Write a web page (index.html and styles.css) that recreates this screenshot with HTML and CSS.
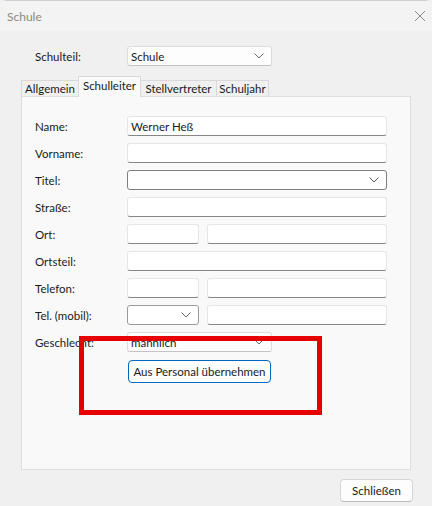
FILE: index.html
```html
<!DOCTYPE html>
<html lang="de">
<head>
<meta charset="utf-8">
<title>Schule</title>
<link rel="stylesheet" href="styles.css">
</head>
<body>
<div class="window">
  <div class="titlebar">
    <span class="title">Schule</span>
    <svg class="close" width="12" height="12" viewBox="0 0 12 12"><path d="M1 1 L11 11 M11 1 L1 11" stroke="#8a8a8a" stroke-width="1" fill="none"/></svg>
  </div>
  <div class="body">
    <div class="top-row">
      <span class="label">Schulteil:</span>
      <div class="select light w145"><span class="val">Schule</span><svg class="chev" width="10" height="6" viewBox="0 0 10 6"><path d="M0.5 0.5 L5 5 L9.5 0.5" stroke="#6a6a6a" fill="none"/></svg></div>
    </div>
    <div class="tabs">
      <div class="tab t-allg">Allgemein</div>
      <div class="tab active t-schul">Schulleiter</div>
      <div class="tab t-stell">Stellvertreter</div>
      <div class="tab t-jahr">Schuljahr</div>
    </div>
    <div class="panel">
      <div class="row"><span class="label">Name:</span><div class="input wide">Werner Heß</div></div>
      <div class="row"><span class="label">Vorname:</span><div class="input wide"></div></div>
      <div class="row"><span class="label">Titel:</span><div class="select dark wide"><span class="val"></span><svg class="chev" width="10" height="6" viewBox="0 0 10 6"><path d="M0.5 0.5 L5 5 L9.5 0.5" stroke="#5a5a5a" fill="none"/></svg></div></div>
      <div class="row"><span class="label">Straße:</span><div class="input wide"></div></div>
      <div class="row"><span class="label">Ort:</span><div class="input small"></div><div class="input rest"></div></div>
      <div class="row"><span class="label">Ortsteil:</span><div class="input wide"></div></div>
      <div class="row"><span class="label">Telefon:</span><div class="input small"></div><div class="input rest"></div></div>
      <div class="row"><span class="label">Tel. (mobil):</span><div class="select mid small"><span class="val"></span><svg class="chev" width="10" height="6" viewBox="0 0 10 6"><path d="M0.5 0.5 L5 5 L9.5 0.5" stroke="#6a6a6a" fill="none"/></svg></div><div class="input rest"></div></div>
      <div class="row"><span class="label">Geschlecht:</span><div class="select light w145"><span class="val">männlich</span><svg class="chev" width="10" height="6" viewBox="0 0 10 6"><path d="M0.5 0.5 L5 5 L9.5 0.5" stroke="#6a6a6a" fill="none"/></svg></div></div>
      <div class="btn-row"><button class="btn primary">Aus Personal übernehmen</button></div>
    </div>
    <div class="footer"><button class="btn close-btn">Schließen</button></div>
  </div>
  <div class="highlight"></div>
</div>
</body>
</html>
```
FILE: styles.css
```css
* { box-sizing: border-box; }
html, body { margin: 0; padding: 0; }
body {
  width: 432px;
  height: 506px;
  background: #f0f0f0;
  font-family: "Segoe UI", Lato, sans-serif;
  font-size: 11.5px;
  color: #1a1a1a;
  overflow: hidden;
}
.window {
  position: relative;
  height: 506px;
  border-top: 1px solid #cfcfcf;
  border-radius: 7px 7px 0 0;
}
.titlebar {
  height: 30px;
  background: #f3f3f3;
  display: flex;
  align-items: center;
  justify-content: space-between;
  padding: 0 6px 0 7px;
}
.title { color: #8a8a8a; font-size: 12px; }
.close { display: block; }
.body { padding-top: 15px; }
.top-row {
  display: flex;
  align-items: center;
  padding-left: 35px;
  height: 20px;
}
.label { width: 92px; flex: none; white-space: nowrap; }
.select, .input {
  height: 20px;
  background: #fff;
  display: flex;
  align-items: center;
  padding: 0 7px 0 3px;
  flex: none;
  white-space: nowrap;
}
.select { justify-content: space-between; border-radius: 3px; }
.select.light { border: 1px solid #dcdcdc; border-bottom-color: #c4c4c4; background: #fdfdfd; }
.select.dark { border: 1px solid #7f7f7f; }
.select.mid { border: 1px solid #9a9a9a; }
.val { white-space: nowrap; }
.chev { display: block; flex: none; }
.w145 { width: 145px; }
.input {
  border: 1px solid #e6e6e6;
  border-bottom: 1px solid #868686;
  border-radius: 3px;
}
.wide { width: 260px; }
.small { width: 72px; }
.rest { width: 180px; margin-left: 8px; }
.tabs {
  display: flex;
  align-items: flex-end;
  margin: 10px 0 0 21px;
  height: 20px;
  position: relative;
  z-index: 1;
}
.tab {
  height: 16px;
  border: 1px solid #d9d9d9;
  border-bottom: none;
  border-right: none;
  background: #f0f0f0;
  display: flex;
  align-items: center;
  justify-content: center;
  white-space: nowrap;
  line-height: 14px;
}
.tab.active {
  height: 21px;
  margin-bottom: -1px;
  background: #f9f9f9;
  border-right: 1px solid #d9d9d9;
  align-items: flex-start;
  padding-top: 2px;
}
.tab.active + .tab { border-left: none; }
.tabs .tab:last-child { border-right: 1px solid #d9d9d9; }
.t-allg { width: 57px; }
.t-schul { width: 63px; }
.t-stell { width: 75px; }
.t-jahr { width: 53px; }
.panel {
  margin-left: 21px;
  width: 390px;
  height: 374px;
  background: #f9f9f9;
  border: 1px solid #dedede;
  padding: 19px 0 0 13px;
  display: flex;
  flex-direction: column;
  gap: 7px;
}
.row { display: flex; align-items: center; }
.btn-row { padding-left: 93px; margin-top: 1px; }
.btn {
  font: inherit;
  color: #1a1a1a;
  background: #fdfdfd;
  border-radius: 4px;
  height: 23px;
  padding: 0;
  cursor: default;
  white-space: nowrap;
}
.btn.primary { width: 143px; border: 1px solid #0067c0; }
.footer { display: flex; justify-content: flex-end; padding: 9px 19px 0 0; }
.close-btn { width: 73px; border: 1px solid #d5d5d5; border-bottom-color: #bdbdbd; }
.highlight {
  position: absolute;
  left: 79px;
  top: 335px;
  width: 243px;
  height: 79px;
  border: 5px solid #e60000;
}
```
